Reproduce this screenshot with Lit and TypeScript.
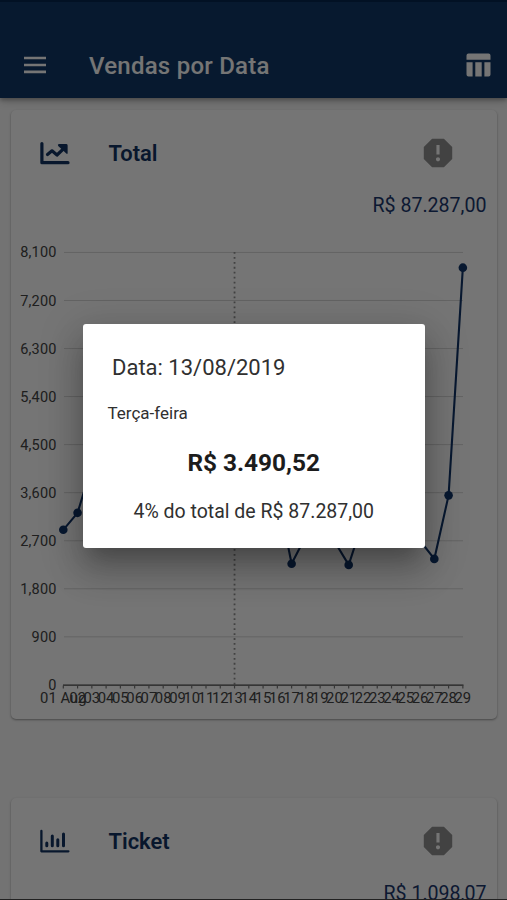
import { LitElement, html, svg, css } from "lit";
import { customElement, property } from "lit/decorators.js";

const DAILY_SALES = [
  2905, 3223, 4100, 3900, 3300, 3650, 4200, 3900, 4300, 4050, 3300, 3100, 3490.52,
  3700, 3950, 3600, 2270, 2790, 3300, 2690, 2248, 3070, 3500, 3900, 3300, 2700, 2360, 3550, 7815,
];

@customElement("sales-chart")
class SalesChart extends LitElement {
  static styles = css`
    :host { display: block; }
    svg { display: block; overflow: visible; }
    .label { font: 14.5px Roboto, sans-serif; fill: #444; }
    .end { text-anchor: end; letter-spacing: 0.15px; }
    .mid { text-anchor: middle; font-size: 14.8px; }
    .grid { stroke: #d8d8d8; stroke-width: 1; }
    .axis { stroke: #444; stroke-width: 1.3; }
    .tick { stroke: #777; stroke-width: 1.2; }
    .guide { stroke: #909090; stroke-width: 1.8; stroke-dasharray: 1.8 3.15; }
    .line { fill: none; stroke: #12366a; stroke-width: 2.1; stroke-linejoin: round; }
    .dot { fill: #12366a; }
  `;

  render() {
    const x = (i: number) => 52.3 + i * 14.27;
    const y = (v: number) => 454.9 - (v / 900) * 48.05;
    return html`<svg width="486" height="480" viewBox="0 0 486 480">
      ${[...Array(10).keys()].map((k) => svg`
        ${k ? svg`<line class="grid" x1="53" x2="452" y1=${y(k * 900)} y2=${y(k * 900)}></line>` : ""}
        <text class="label end" x="45.5" y=${y(k * 900) + 5}>${(k * 900).toLocaleString("en-US")}</text>`)}
      <line class="guide" x1=${x(12)} x2=${x(12)} y1="22" y2="455"></line>
      <line class="axis" x1="52" x2="452.5" y1="455.2" y2="455.2"></line>
      ${DAILY_SALES.map((_, i) => svg`
        <line class="tick" x1=${x(i)} x2=${x(i)} y1="455.5" y2="458.5"></line>
        <text class="label mid" x=${x(i)} y="472.6">${String(i + 1).padStart(2, "0")}${i === 0 ? " Aug" : ""}</text>`)}
      <polyline class="line" points=${DAILY_SALES.map((v, i) => `${x(i)},${y(v)}`).join(" ")}></polyline>
      ${DAILY_SALES.map((v, i) => svg`<circle class="dot" cx=${x(i)} cy=${y(v)} r="4.3"></circle>`)}
    </svg>`;
  }
}

@customElement("metric-card")
class MetricCard extends LitElement {
  @property() heading = "";
  @property() amount = "";
  @property() icon = "line";

  static styles = css`
    :host {
      display: block;
      background: #fff;
      border-radius: 5px;
      box-shadow: 0 1px 2px rgba(0, 0, 0, 0.28), 0 1px 3px rgba(0, 0, 0, 0.12);
      font-family: Roboto, sans-serif;
      color: #1c386d;
    }
    .top { display: flex; align-items: center; height: 86px; padding: 0 44px 0 27.5px; }
    .heading { margin-left: 39px; flex: 1; font-size: 21.9px; font-weight: 600; color: #123462; }
    .amount { display: block; height: 24px; line-height: 24px; margin-top: -2.5px; margin-bottom: -0.5px; padding-right: 10.5px; text-align: right; font-size: 19.6px; }
    svg { display: block; }
    .stroke { fill: none; stroke: #123462; }
    .fill { fill: #123462; }
    .alert { fill: #909090; }
  `;

  render() {
    const glyph = this.icon === "line"
      ? html`<svg width="31" height="24" viewBox="0 0 31 24">
          <path class="stroke" stroke-width="3.2" stroke-linecap="round" stroke-linejoin="round" d="M2.9 2.5V21.7H29"></path>
          <path class="stroke" stroke-width="3.2" stroke-linejoin="round" stroke-linecap="round" d="M8.5 13.5L13 9.8L18 14L25.5 6.8"></path>
          <path class="fill" d="M19.8 3H27.2Q28.6 3 28.6 4.4V12.2Q28.4 13.6 27.3 12.6L19.2 4.9Q18.3 3.4 19.8 3Z"></path>
        </svg>`
      : html`<svg width="31" height="24" viewBox="0 0 31 24">
          <path class="stroke" stroke-width="2.3" stroke-linecap="round" stroke-linejoin="round" d="M2.4 2V22.3H29.4"></path>
          <path class="stroke" stroke-width="3" stroke-linecap="round" d="M7.8 14V16.8M13.3 7V16.8M18.8 10.7V16.8M24.5 5V16.8"></path>
        </svg>`;
    return html`
      <div class="top">
        ${glyph}
        <span class="heading">${this.heading}</span>
        <svg class="alert" width="30" height="30" viewBox="2.5 2.5 19 19">
          <path d="M15.73 3H8.27L3 8.27v7.46L8.27 21h7.46L21 15.73V8.27L15.73 3zM12 17.3c-.72 0-1.3-.58-1.3-1.3 0-.72.58-1.3 1.3-1.3.72 0 1.3.58 1.3 1.3 0 .72-.58 1.3-1.3 1.3zm1-4.3h-2V7h2v6z"></path>
        </svg>
      </div>
      <span class="amount">${this.amount}</span>
      <slot></slot>`;
  }
}

@customElement("app-root")
class AppRoot extends LitElement {
  static styles = css`
    :host { display: block; position: relative; height: 900px; overflow: hidden; background: #fafafa; font-family: Roboto, sans-serif; }
    .bar {
      position: relative; z-index: 1; box-sizing: border-box; height: 98px; padding: 31px 16px 2px 23px;
      display: flex; align-items: center; background: #103866; border-top: 2px solid #06274f;
      box-shadow: 0 2px 4px rgba(0, 0, 0, 0.26), 0 4px 8px rgba(0, 0, 0, 0.16); color: #fff;
    }
    .bar svg { display: block; fill: #fff; }
    .title { flex: 1; margin-left: 42px; padding-top: 2px; font-size: 24px; font-weight: 500; letter-spacing: 0.24px; }
    .cards { display: flex; flex-direction: column; gap: 79px; padding: 12px 10px 0 11px; }
    .first { height: 609px; }
    .second { height: 200px; }
    .chart { margin-top: 13px; }
    .scrim {
      position: absolute; inset: 0; z-index: 2; box-sizing: border-box; padding-bottom: 27px; padding-left: 1px;
      display: flex; align-items: center; justify-content: center;
      background: rgba(0, 0, 0, 0.54); border-bottom: 1px solid #222;
    }
    .dialog {
      box-sizing: border-box; width: 342px; height: 224px; padding: 28px 25px 0 24.5px; background: #fff; border-radius: 3px;
      box-shadow: 0 15px 20px -9px rgba(0, 0, 0, 0.22), 0 24px 34px 3px rgba(0, 0, 0, 0.16), 0 9px 40px 8px rgba(0, 0, 0, 0.13);
      color: #303030;
    }
    .date { line-height: 32px; padding-left: 4.5px; font-size: 22px; }
    .weekday { margin-top: 16px; line-height: 26px; font-size: 17px; }
    .value { margin-top: 20px; line-height: 34px; text-align: center; font-size: 24.4px; font-weight: 700; color: #1c1c1c; }
    .share { margin-top: 18px; line-height: 28px; text-align: center; font-size: 19.5px; }
  `;

  render() {
    return html`
      <header class="bar">
        <svg width="24" height="18" viewBox="0 0 24 18"><path d="M1 .7h22v2.6H1zM1 7.7h22v2.6H1zM1 14.6h22v2.6H1z"></path></svg>
        <span class="title">Vendas por Data</span>
        <svg width="25" height="24" viewBox="0 0 25 24">
          <path d="M2.5.5h20a2 2 0 0 1 2 2v4.2H.5V2.5a2 2 0 0 1 2-2zM.5 9.2h6.1v14.3H2.5a2 2 0 0 1-2-2zM9.3 9.2h6.4v14.3H9.3zM18.4 9.2h6.1v12.3a2 2 0 0 1-2 2h-4.1z"></path>
        </svg>
      </header>
      <main class="cards">
        <metric-card class="first" heading="Total" amount="R$ 87.287,00" icon="line">
          <sales-chart class="chart"></sales-chart>
        </metric-card>
        <metric-card class="second" heading="Ticket" amount="R$ 1.098,07" icon="bars"></metric-card>
      </main>
      <div class="scrim">
        <section class="dialog" role="dialog">
          <div class="date">Data: 13/08/2019</div>
          <div class="weekday">Terça-feira</div>
          <div class="value">R$ 3.490,52</div>
          <div class="share">4% do total de R$ 87.287,00</div>
        </section>
      </div>`;
  }
}
